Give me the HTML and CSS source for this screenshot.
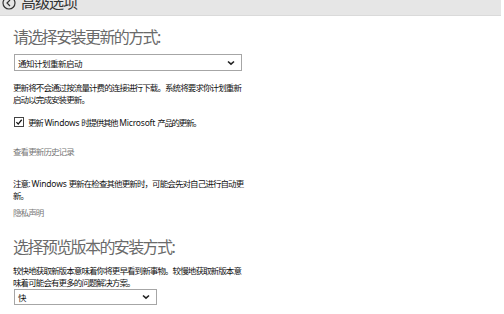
FILE: index.html
```html
<!DOCTYPE html>
<html lang="zh-CN">
<head>
    <meta charset="UTF-8">
    <meta name="viewport" content="width=device-width, initial-scale=1.0">
    <title>高级选项</title>
    <link rel="stylesheet" href="styles.css">
</head>
<body>
    <header class="topbar">
        <svg class="back-icon" width="14" height="14" viewBox="0 0 14 14">
            <circle cx="7" cy="7" r="6" fill="none" stroke="#333" stroke-width="1.2"/>
            <path d="M8 4 L5 7 L8 10" fill="none" stroke="#333" stroke-width="1.2"/>
        </svg>
        <span class="topbar-title">高级选项</span>
    </header>

    <main class="content">
        <h2 class="section-title">请选择安装更新的方式:</h2>
        <div class="dropdown dropdown-wide">
            <span>通知计划重新启动</span>
            <svg width="8" height="6" viewBox="0 0 8 6"><path d="M1 1.5 L4 4.2 L7 1.5" fill="none" stroke="#222" stroke-width="1.6"/></svg>
        </div>

        <p class="desc desc-first">更新将不会通过按流量计费的连接进行下载。系统将要求你计划重新<br>启动以完成安装更新。</p>

        <label class="check-row">
            <span class="check-box">
                <svg width="10" height="10" viewBox="0 0 10 10"><path d="M1.8 5.2 L4 7.6 L8.4 2.2" fill="none" stroke="#111" stroke-width="1.6"/></svg>
            </span>
            <span>更新<span class="latin">Windows</span>时提供其他<span class="latin">Microsoft</span>产品的更新。</span>
        </label>

        <a class="link link-history">查看更新历史记录</a>

        <p class="desc desc-note">注意:<span class="latin">Windows</span>更新在检查其他更新时，可能会先对自己进行自动更<br>新。</p>

        <a class="link link-privacy">隐私声明</a>

        <h2 class="section-title section-title-second">选择预览版本的安装方式:</h2>
        <p class="desc desc-preview">较快地获取新版本意味着你将更早看到新事物。较慢地获取新版本意<br>味着可能会有更多的问题解决方案。</p>
        <div class="dropdown dropdown-narrow">
            <span>快</span>
            <svg width="8" height="6" viewBox="0 0 8 6"><path d="M1 1.5 L4 4.2 L7 1.5" fill="none" stroke="#222" stroke-width="1.6"/></svg>
        </div>
    </main>
</body>
</html>
```

FILE: styles.css
```css
body {
    margin: 0;
    background: #fff;
    font-family: "Noto Sans", "Noto Sans CJK SC", sans-serif;
    color: #111;
    overflow: hidden;
}
.topbar {
    display: flex;
    align-items: flex-start;
    gap: 5px;
    height: 15px;
    margin-right: 3px;
    padding-left: 2px;
    overflow: hidden;
    background: #e6e6e6;
    border-bottom: 1px solid #dadada;
}
.back-icon {
    flex: none;
    margin-top: -4px;
}
.topbar-title {
    margin-top: -6px;
    font-size: 15px;
    line-height: 16px;
    letter-spacing: -1px;
    color: #333;
}
.content {
    padding-left: 13px;
}
.section-title {
    margin: 11px 0 0;
    font-size: 16px;
    font-weight: normal;
    line-height: 20px;
    letter-spacing: -1.6px;
    color: #6a6a6a;
}
.section-title-second {
    margin-top: 18px;
}
.dropdown {
    display: flex;
    align-items: center;
    justify-content: space-between;
    box-sizing: border-box;
    margin-top: 7px;
    margin-left: 1px;
    padding: 0 6px 0 3px;
    height: 17px;
    border: 1px solid #a6a6a6;
    font-size: 8.5px;
    letter-spacing: -0.5px;
    color: #111;
}
.dropdown-wide {
    width: 228px;
}
.dropdown-narrow {
    width: 143px;
    height: 16px;
    margin-top: 0;
}
.desc {
    margin: 0;
    font-size: 8.5px;
    line-height: 12px;
    letter-spacing: -0.9px;
}
.latin {
    margin: 0 2px;
    letter-spacing: -0.2px;
}
.desc-first {
    margin-top: 11px;
}
.desc-note {
    margin-top: 20px;
}
.desc-preview {
    margin-top: 8px;
}
.check-row {
    display: flex;
    align-items: center;
    gap: 4px;
    margin-top: 10px;
    margin-left: 1px;
    height: 12px;
    font-size: 8.5px;
    letter-spacing: -1.3px;
}
.check-box {
    display: flex;
    align-items: center;
    justify-content: center;
    box-sizing: border-box;
    width: 10px;
    height: 10px;
    border: 1px solid #444;
}
.link {
    display: block;
    font-size: 8.5px;
    line-height: 12px;
    letter-spacing: -0.9px;
    color: #777;
}
.link-history {
    margin-top: 18px;
}
.link-privacy {
    margin-top: 5px;
}
```
